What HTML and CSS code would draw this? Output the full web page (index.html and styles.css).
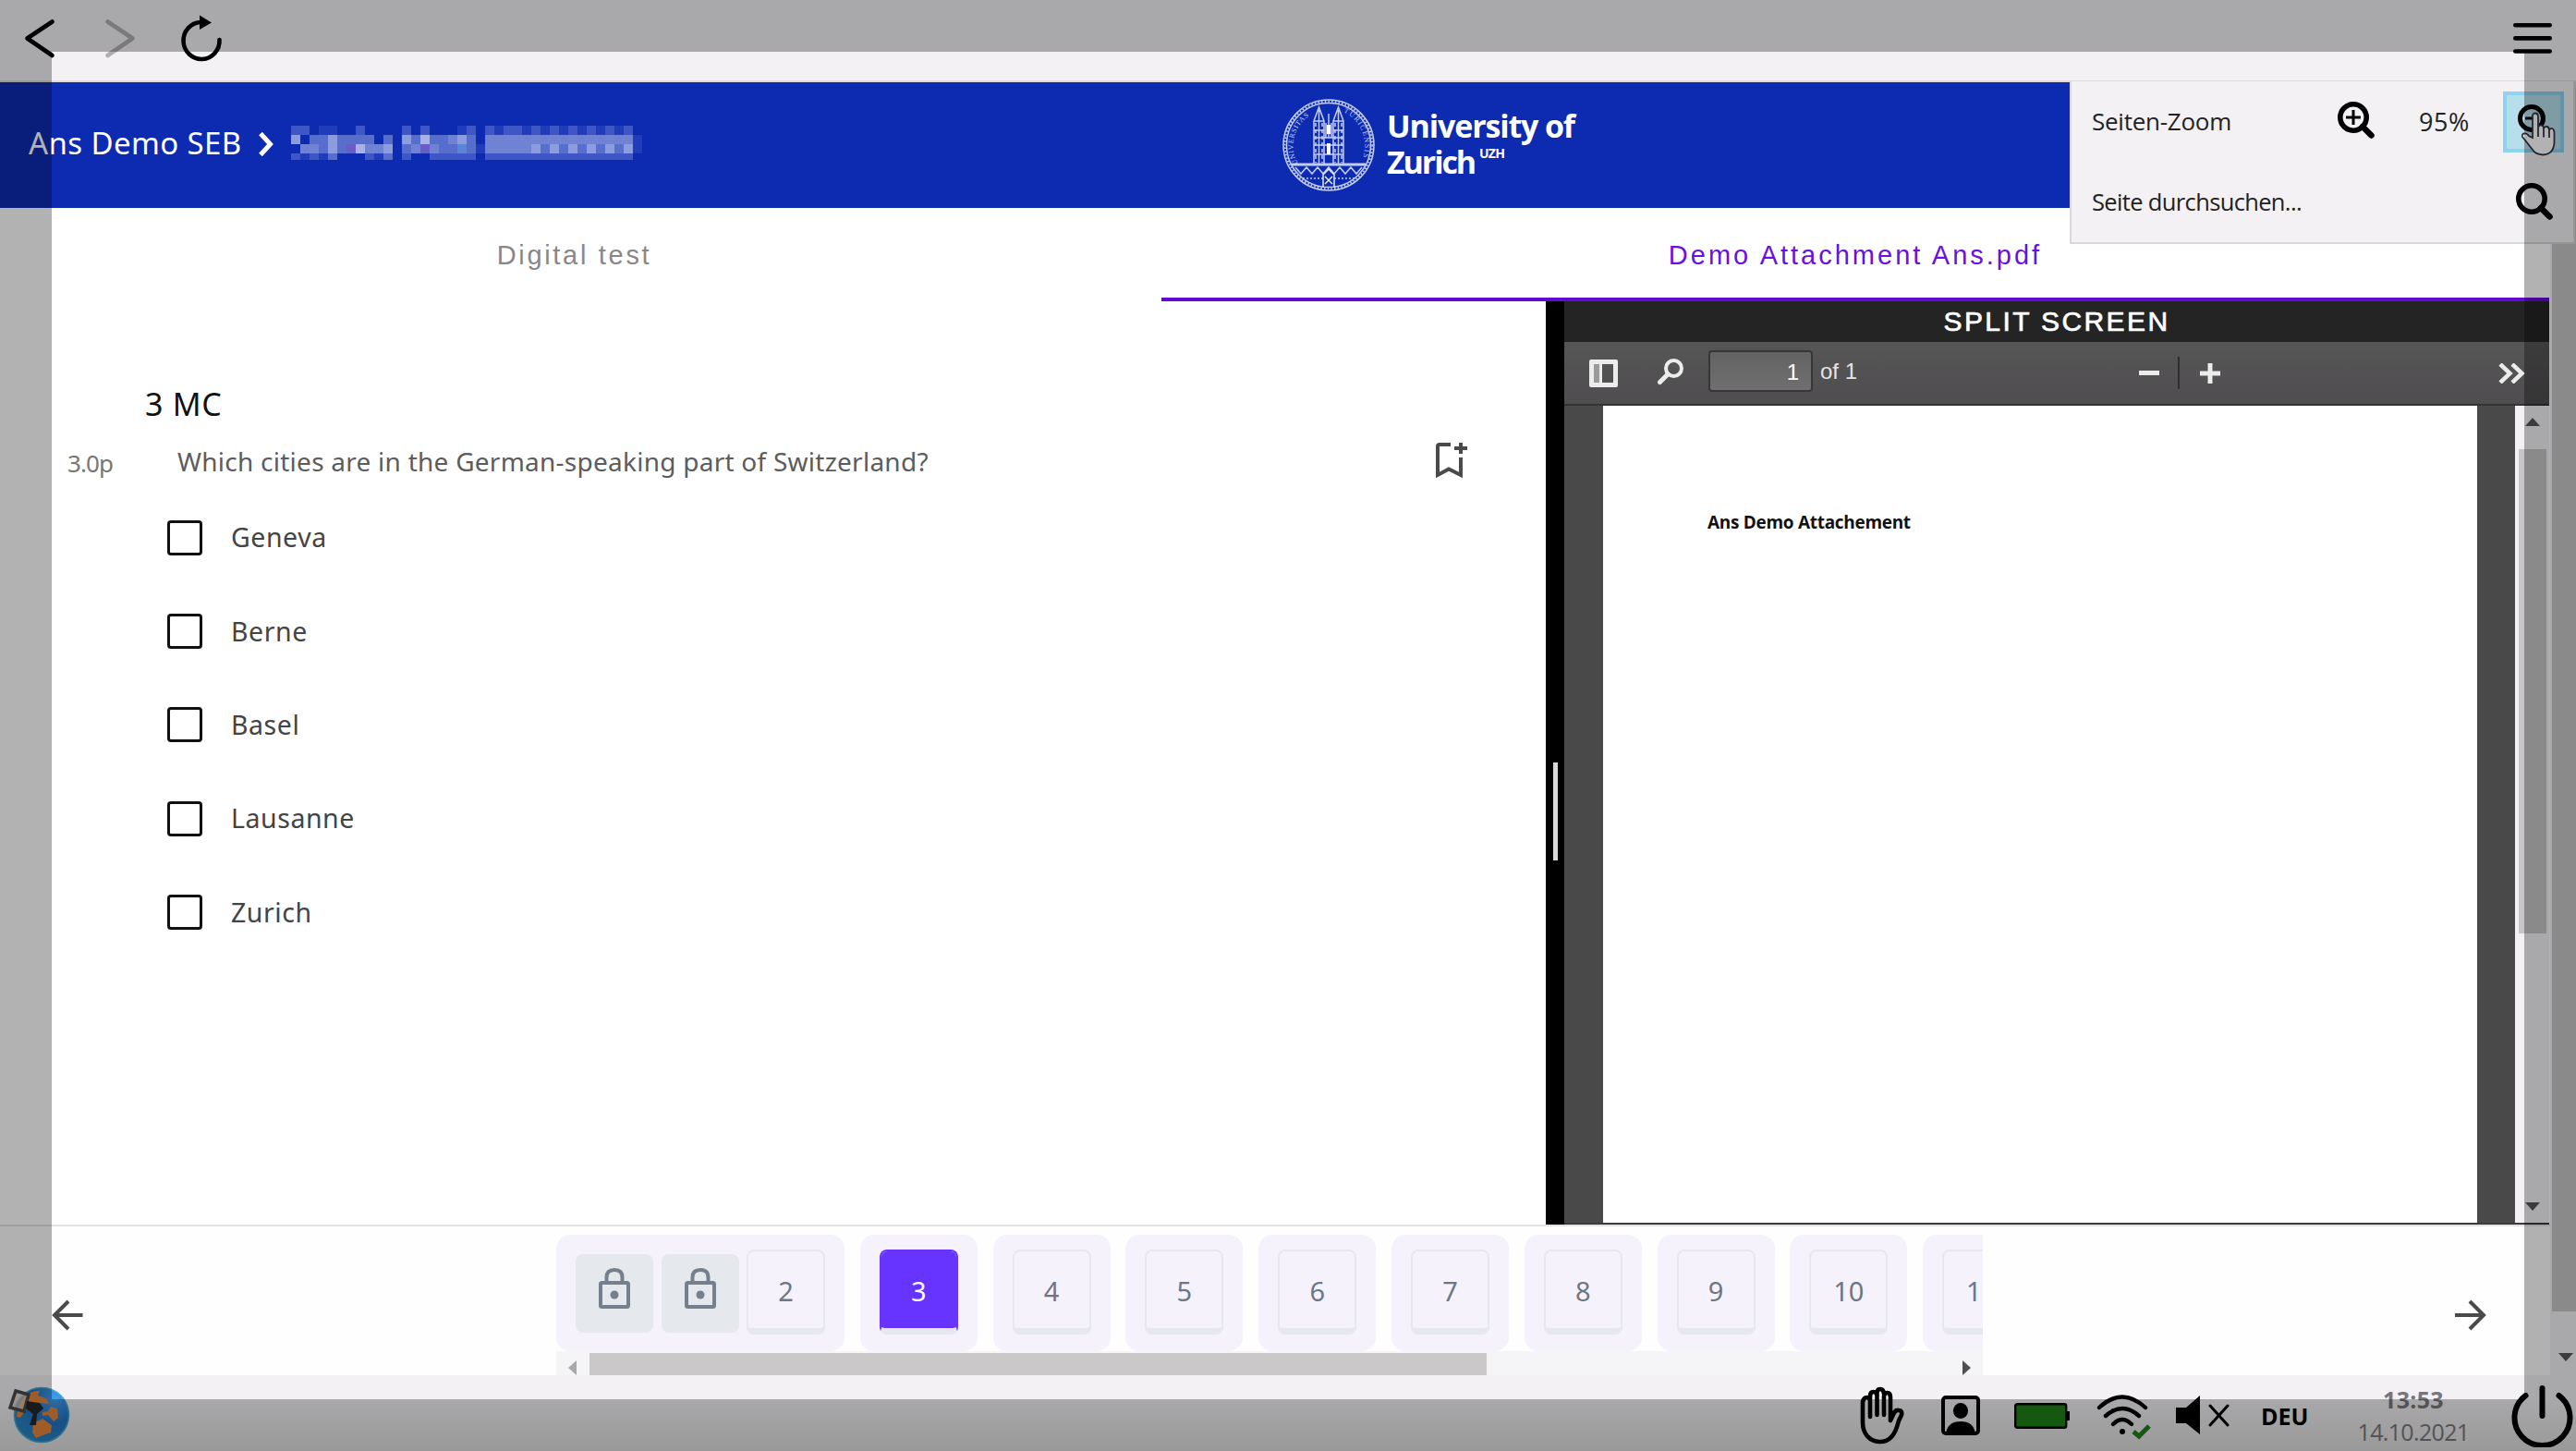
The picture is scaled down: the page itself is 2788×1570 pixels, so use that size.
FILE: index.html
```html
<!DOCTYPE html>
<html lang="de">
<head>
<meta charset="utf-8">
<title>Ans Demo SEB</title>
<link rel="stylesheet" href="styles.css">
</head>
<body>
<div class="toolbar">
  <svg class="nav-icons" viewBox="0 0 260 89" fill="none" stroke="#000" stroke-width="4.600" stroke-linecap="round" stroke-linejoin="round">
    <path d="M56.500 23.500L29.500 41.500L56.500 60"/>
    <path d="M116.500 23.500L143.500 41.500L116.500 60" stroke="#b0aeb0"/>
    <path d="M237.500 43A19.500 20 0 1 1 217 24"/>
    <path d="M216 16.500V32L229 24.500Z" fill="#000" stroke="none"/>
  </svg>
  <svg class="burger" viewBox="0 0 42 33" stroke="#000" stroke-width="4.600" stroke-linecap="round"><path d="M2.300 2.300H39.700M2.300 16.400H39.700M2.300 30.500H39.700"/></svg>
</div>
<div class="browser">
  <div class="page">
    <header class="header">
      <div class="crumbs">
        <span class="crumb">Ans Demo SEB</span>
        <svg class="chev" viewBox="0 0 18 28" fill="none" stroke="#fff" stroke-width="5"><path d="M3 2.500L13.500 14L3 25.500"/></svg>
        <svg class="redacted" viewBox="0 0 38 37" preserveAspectRatio="none" shape-rendering="crispEdges">
          <g fill="#3f57c6"><path d="M0 0h2v10h-2zM7 0h1v10h-1zM12 0h1v10h-1zM14 0h1v10h-1zM19 0h1v10h-1zM21 0h16v10h-16zM0 30h1v7h-1zM2 30h1v7h-1zM8 30h1v7h-1zM12 30h1v7h-1zM15 30h5v7h-5zM21 30h16v7h-16z"/></g>
          <g fill="#203cba"><path d="M3 0h2v10h-2zM18 0h1v10h-1zM22 0h1v10h-1zM25 0h1v10h-1zM27 0h1v10h-1zM29 0h1v10h-1zM31 0h1v10h-1zM33 0h1v10h-1zM35 0h1v10h-1zM37 10h1v20h-1zM1 30h1v7h-1zM3 30h1v7h-1zM9 30h1v7h-1zM20 20h1v10h-1z"/></g>
          <g fill="#586ecc"><path d="M2 10h2v10h-2zM5 10h4v10h-4zM10 10h1v10h-1zM13 10h1v10h-1zM15 10h2v10h-2zM19 10h1v10h-1zM3 20h1v10h-1zM5 20h2v10h-2zM8 20h2v10h-2zM12 20h2v10h-2zM16 20h4v10h-4zM27 20h1v10h-1zM29 20h1v10h-1zM31 20h1v10h-1zM33 20h1v10h-1zM35 20h1v10h-1zM4 30h1v7h-1zM10 30h1v7h-1z"/></g>
          <g fill="#6f82d3"><path d="M21 10h16v10h-16zM21 20h5v10h-5zM1 20h2v10h-2zM8 20h2v10h-2zM13 20h1v10h-1zM17 10h1v10h-1zM15 20h1v10h-1z"/></g>
          <g fill="#8c9cde"><path d="M0 10h1v10h-1zM4 10h1v10h-1zM12 10h1v10h-1zM18 10h1v10h-1zM10 20h1v10h-1zM26 20h1v10h-1zM28 20h1v10h-1zM30 20h1v10h-1zM32 20h1v10h-1zM34 20h1v10h-1zM36 20h1v10h-1zM4 20h1v10h-1z"/></g>
          <g fill="#a9b2e6"><path d="M7 20h1v10h-1zM14 10h1v10h-1z"/></g>
          <g fill="#6a5cc8"><path d="M6 20h1v10h-1zM14 20h1v10h-1z"/></g>
          <path fill="#5b85d6" d="M18 20h1v10h-1z"/>
        </svg>
      </div>
      <div class="logo">
        <svg class="seal" viewBox="0 0 100 100" fill="none" stroke="#c3ccf2" stroke-width="1.500">
          <circle cx="50" cy="50" r="49"/><circle cx="50" cy="50" r="45.500"/>
          <circle cx="50" cy="50" r="47.300" stroke-dasharray="1.500 2.200" stroke-width="2"/>
          <path d="M10 71H90" stroke-width="3"/>
          <path d="M34 70V24L39.500 9L45 24V70M55 70V24L60.500 9L66 24V70M39.500 12V70M60.500 12V70M34 24H45M55 24H66M34 34H45M55 34H66M34 42H66M34 50H66M34 60H66M50 16V42M47 26V42M53 26V42"/>
          <path d="M36 26V69M43 26V69M57 26V69M64 26V69" stroke-dasharray="4 3"/>
          <path d="M50 28V38M50 48V60" stroke="#fff" stroke-width="4"/>
          <path d="M14 74L20 81L26 74L32 81L38 74L44 81L50 74L56 81L62 74L68 81L74 74L80 81L86 74"/>
          <path d="M22 86H44M56 86H78" stroke-dasharray="2 2"/>
          <path d="M44 96V82L50 76L56 82V96M46 84L54 92M54 84L46 92" stroke="#e5eafb"/>
          <path id="arcl" stroke="none" d="M17 70A38 38 0 0 1 39 14"/>
          <path id="arcr" stroke="none" d="M66 14A40 40 0 0 1 84 70"/>
          <text class="seal-text"><textPath href="#arcl" textLength="58">UNIVERSITAS</textPath></text>
          <text class="seal-text"><textPath href="#arcr" textLength="58">TURICENSIS</textPath></text>
        </svg>
        <div class="logo-name">
          <div><span class="name-top">University of</span></div>
          <div><span class="name-bottom">Zurich</span><span class="uzh">UZH</span></div>
        </div>
      </div>
    </header>
    <nav class="tabs">
      <div class="tab">Digital test</div>
      <div class="tab active">Demo Attachment Ans.pdf</div>
    </nav>
    <main class="main">
      <section class="question">
        <h1>3 MC</h1>
        <div class="prompt">
          <span class="points">3.0p</span>
          <span class="prompt-text">Which cities are in the German-speaking part of Switzerland?</span>
          <svg class="bookmark" viewBox="0 0 36 40" fill="none" stroke="#4a4a4a" stroke-width="4"><path d="M17 3H5Q3 3 3 5V36L15 29.500L28 36V17M28 1V13M21 7H35"/></svg>
        </div>
        <ul class="answers">
          <li><i class="box"></i><span>Geneva</span></li>
          <li><i class="box"></i><span>Berne</span></li>
          <li><i class="box"></i><span>Basel</span></li>
          <li><i class="box"></i><span>Lausanne</span></li>
          <li><i class="box"></i><span>Zurich</span></li>
        </ul>
      </section>
      <div class="divider"><i></i></div>
      <section class="viewer">
        <div class="split">SPLIT SCREEN</div>
        <div class="pdfbar">
          <svg class="side" viewBox="0 0 31 30"><path fill="#ececec" fill-rule="evenodd" d="M2 0H29Q31 0 31 2V28Q31 30 29 30H2Q0 30 0 28V2Q0 0 2 0ZM14 5V25H26V5Z"/><path fill="#9a9a9a" d="M5 5H11V25H5Z"/></svg>
          <svg class="find" viewBox="0 0 30 30" fill="none" stroke="#ececec"><circle cx="18.500" cy="11.500" r="8.500" stroke-width="4"/><path d="M12 18L3.500 26.500" stroke-width="5" stroke-linecap="round"/></svg>
          <span class="pageno">1</span><span class="of">of 1</span>
          <span class="zoomer"><i class="minus"></i><i class="sep"></i><svg class="plus" viewBox="0 0 22 22"><path fill="#ececec" d="M8.500 0h5v8.500H22v5h-8.500V22h-5v-8.500H0v-5h8.500z"/></svg></span>
          <svg class="more" viewBox="0 0 30 22" fill="none" stroke="#ececec" stroke-width="4.500"><path d="M2 1L12.500 11L2 21M15 1L25.500 11L15 21"/></svg>
        </div>
        <div class="pdfbody">
          <div class="sheet"><span class="doc">Ans Demo Attachement</span></div>
          <div class="vbar"><svg viewBox="0 0 16 9"><path d="M0 9L8 0L16 9z"/></svg><i></i><svg viewBox="0 0 16 9"><path d="M0 0L8 9L16 0z"/></svg></div>
        </div>
      </section>
    </main>
    <footer class="pager">
      <svg class="arrow" viewBox="0 0 34 34" fill="none" stroke="#4a4a4a" stroke-width="4"><path d="M33.500 17H3M18 2L3 17L18 32"/></svg>
      <div class="strip">
        <div class="groups">
          <div class="group">
            <span class="lock"><svg viewBox="0 0 36 46" fill="none" stroke="#76808c" stroke-width="4"><rect x="3" y="17" width="30" height="26" rx="1.500"/><path d="M9.500 17V11Q9.500 3 18 3T26.500 11V17"/><circle cx="18" cy="30" r="4.500" fill="#76808c" stroke="none"/></svg></span>
            <span class="lock"><svg viewBox="0 0 36 46" fill="none" stroke="#76808c" stroke-width="4"><rect x="3" y="17" width="30" height="26" rx="1.500"/><path d="M9.500 17V11Q9.500 3 18 3T26.500 11V17"/><circle cx="18" cy="30" r="4.500" fill="#76808c" stroke="none"/></svg></span>
            <span class="num">2</span>
          </div>
          <div class="group"><span class="num current">3</span></div>
          <div class="group"><span class="num">4</span></div>
          <div class="group"><span class="num">5</span></div>
          <div class="group"><span class="num">6</span></div>
          <div class="group"><span class="num">7</span></div>
          <div class="group"><span class="num">8</span></div>
          <div class="group"><span class="num">9</span></div>
          <div class="group"><span class="num">10</span></div>
          <div class="group"><span class="num">11</span></div>
        </div>
        <div class="hbar"><svg viewBox="0 0 9 16"><path fill="#a8a8a8" d="M9 0V16L0 8z"/></svg><i></i><svg class="hr" viewBox="0 0 9 16"><path fill="#505050" d="M0 0V16L9 8z"/></svg></div>
      </div>
      <svg class="arrow next" viewBox="0 0 34 34" fill="none" stroke="#4a4a4a" stroke-width="4"><path d="M0 17H31M16 2L31 17L16 32"/></svg>
    </footer>
  </div>
  <div class="outer-bar"><i></i><svg viewBox="0 0 16 9"><path d="M0 0L8 9L16 0z"/></svg></div>
</div>
<div class="taskbar">
  <svg class="globe" viewBox="0 0 68 62">
    <defs><radialGradient id="sea" cx=".75" cy=".2" r=".9"><stop offset="0" stop-color="#3ea0ee"/><stop offset=".5" stop-color="#2272c0"/><stop offset="1" stop-color="#2b86c0"/></radialGradient></defs>
    <circle cx="37" cy="31" r="29.500" fill="url(#sea)" stroke="#48a6cc" stroke-width="1.500"/>
    <g fill="#e2853a"><path d="M18 12Q26 4 35 5L33 10L42 13L45 19L36 18L32 24L22 22L14 34L10 33Q11 20 18 12Z"/><path d="M38 28L44 27L47 22L54 24L55 34L50 38L44 31L38 32Z"/><path d="M28 40L38 35L48 42L47 50L38 53L31 56L27 50Z"/></g>
    <path d="M9 5L23 9L18 27L3 23Z" fill="#d9c9b4" fill-opacity=".7" stroke="#4a4a4d" stroke-width="3.500"/>
    <path d="M21 16L35 18L39 24L32 30L31 42L24 42L28 30L20 24Z" fill="#262628"/>
  </svg>
  <div class="tray">
    <svg class="t-hand" viewBox="0 0 48 63" fill="none" stroke="#000" stroke-width="4.600" stroke-linecap="round" stroke-linejoin="round"><path d="M11 31V16Q11 12 7.500 12T3 17V39C3 52 11 60 22 60C32 60 37 53 40 44Q42 36 45 31Q46 26 42 26Q38 25 36 31L33 37V12Q33 7 29.500 7T26 11V31M18.500 31V7Q18.500 3 22 3T26 8M18.500 10Q18 6 14.500 6T11 11V20M11 22V33"/></svg>
    <svg class="t-user" viewBox="0 0 42 43"><rect x="2" y="2" width="38" height="39" rx="3" fill="none" stroke="#000" stroke-width="4"/><ellipse cx="21" cy="16.500" rx="8" ry="8.500"/><path d="M5 41Q7 28 21 28T37 41z"/></svg>
    <svg class="t-batt" viewBox="0 0 60 28"><rect x="1.200" y="1.200" width="55" height="25.600" rx="2" fill="#1f7f18" stroke="#000" stroke-width="2.400"/><path d="M57 9H60V19H57z"/></svg>
    <svg class="t-wifi" viewBox="0 0 60 49" fill="none" stroke="#000" stroke-width="4.400" stroke-linecap="round"><path d="M3 14Q28 -9 53 14M10 23Q28 7 46 23M18 32Q28 22 38 32"/><circle cx="28" cy="40" r="3" fill="#000" stroke="none"/><path d="M40 40L46 45L57 34" stroke="#1f7f18" stroke-width="5" stroke-linecap="butt"/></svg>
    <svg class="t-vol" viewBox="0 0 60 42"><path d="M1 13H12L27 0V42L12 30H1z"/><path d="M38 11L57 32M57 11L38 32" stroke="#000" stroke-width="3" stroke-linecap="round"/></svg>
    <span class="lang">DEU</span>
    <div class="clock"><b>13:53</b><span class="date">14.10.2021</span></div>
    <svg class="t-power" viewBox="0 0 67 68" fill="none" stroke="#000" stroke-width="6" stroke-linecap="round"><path d="M15.500 12A30 30 0 1 0 51.500 12M33.500 4V34"/></svg>
  </div>
</div>
<div class="menu">
  <div class="menu-row"><span class="label">Seiten-Zoom</span>
    <svg class="m-plus" viewBox="0 0 42 42" fill="none" stroke="#000"><circle cx="18" cy="18" r="14.200" stroke-width="5.600"/><path d="M28 28L37.500 37.500" stroke-width="6.500" stroke-linecap="round"/><path d="M10 18H26M18 10V26" stroke-width="3"/></svg>
    <span class="pct">95%</span>
    <span class="hot"><svg viewBox="0 0 42 42" fill="none" stroke="#000"><circle cx="18" cy="18" r="12.500" stroke-width="5"/><path d="M11 18H25" stroke-width="3"/></svg></span>
  </div>
  <div class="menu-row"><span class="label search">Seite durchsuchen...</span>
    <svg class="m-find" viewBox="0 0 42 42" fill="none" stroke="#000"><circle cx="18" cy="18" r="14.200" stroke-width="5.600"/><path d="M28 28L37.500 37.500" stroke-width="6.500" stroke-linecap="round"/></svg>
  </div>
</div>
<svg class="cursor" viewBox="0 0 38 48"><path d="M13 28V5Q13 1.500 16 1.500T19 5V17Q20 14 22.500 14.500T25 18Q26 15.500 28.500 16T31 20Q32 17.500 34 18T36.500 22V33Q36 46 24 46.500Q16 46 13 41L2 27Q1 24 4 23.500T9 26Z" fill="#fff" stroke="#35364a" stroke-width="1.800"/><path d="M19 17V27M25 18V27.500M31 20V28" stroke="#35364a" stroke-width="1.800"/></svg>
<div class="shade"></div>
</body>
</html>
```
FILE: styles.css
```css
* { box-sizing: border-box; }
body { margin: 0; width: 2788px; height: 1570px; overflow: hidden; display: flex; flex-direction: column; background: #f3f1f4; font-family: "Noto Sans", sans-serif; }
svg { display: block; flex: none; }
span, b { white-space: nowrap; }

/* Browser toolbar */
.toolbar { height: 89px; flex: none; display: flex; justify-content: space-between; border-bottom: 2px solid #dedcdc; }
.nav-icons { width: 260px; height: 89px; }
.burger { width: 42px; height: 33px; margin: 25px 26px 0 0; }

.browser { height: 1399px; flex: none; display: flex; }
.page { width: 2760px; display: flex; flex-direction: column; background: #fff; }

/* Page header */
.header { height: 136px; flex: none; display: flex; align-items: center; background: #0d2bb1; color: #fff; }
.crumbs { width: 1388px; display: flex; align-items: center; padding: 0 0 5px 31px; }
.crumb { font-size: 33px; width: 230px; letter-spacing: .4px; }
.chev { width: 18px; height: 28px; margin: 2px 0 0 18px; }
.redacted { width: 380px; height: 37px; margin: -1px 0 0 18px; }
.logo { display: flex; gap: 13px; }
.seal { width: 100px; height: 100px; }
.seal-text { font: 8px "Liberation Serif", serif; fill: #c3ccf2; stroke: none; }
.logo-name { font: 700 34px/39px "Open Sans", sans-serif; padding-top: 10px; }
.logo-name > div { display: flex; height: 39px; }
.name-top { letter-spacing: -1.14px; }
.name-bottom { letter-spacing: -2.1px; }
.uzh { font-size: 14px; line-height: 20px; margin-left: 5px; letter-spacing: -.8px; }

.tabs { height: 101px; flex: none; display: flex; font: 29px/102px "Liberation Sans", Arial, sans-serif; color: #888; letter-spacing: 2.69px; }
.tab { width: 1257px; text-align: center; padding-right: 14px; }
.tab.active { width: 1502px; padding: 0; color: #6a10e0; border-bottom: 4px solid #6408d8; letter-spacing: 3px; }

/* Question */
.main { height: 999px; flex: none; display: flex; }
.question { width: 1673px; flex: none; }
h1 { margin: 91px 0 0 157px; font-weight: 400; font-size: 34px; line-height: 40px; letter-spacing: .7px; color: #111; }
.prompt { height: 54px; margin-top: 15px; display: flex; align-items: center; color: #5c5c5e; font-size: 28px; }
.points { width: 119px; margin-left: 73px; font-size: 26px; letter-spacing: -.9px; color: #777; padding-top: 3px; }
.prompt-text { width: 813px; letter-spacing: .25px; }
.bookmark { width: 36px; height: 40px; margin: 0 0 2px 548px; }
.answers { list-style: none; margin: 5px 0 0 181px; padding: 0; font-size: 28.500px; letter-spacing: .55px; color: #444; }
.answers li { height: 101.400px; display: flex; align-items: center; gap: 31px; }
.answers span { padding-bottom: 1px; }
.box { width: 38px; height: 38px; border: 3px solid #111; border-radius: 4px; }
.divider { width: 20px; flex: none; background: #000; display: flex; align-items: center; justify-content: center; }
.divider i { width: 5px; height: 106px; background: #d8d8d8; margin-top: 104px; }

/* PDF viewer */
.viewer { width: 1066px; flex: none; display: flex; flex-direction: column; border-bottom: 2px solid #3c3a3b; background: #4a494a; }
.split { height: 44px; flex: none; background: #242424; color: #fff; text-align: center; font: 30px/43px "Liberation Sans", Arial, sans-serif; letter-spacing: 2.400px; -webkit-text-stroke: .7px #fff; }
.pdfbar { height: 69px; flex: none; display: flex; align-items: center; background: linear-gradient(#575657, #4f4d4f); border-bottom: 2px solid #333; color: #e4e4e4; font: 24px "Liberation Sans", Arial, sans-serif; }
.side { width: 31px; height: 30px; margin-left: 27px; }
.find { width: 30px; height: 30px; margin: -4px 0 0 42px; }
.pageno { width: 113px; height: 45px; margin: -4px 8px 0 26px; border: 2px solid #363636; border-radius: 4px; background: linear-gradient(#646364, #706f70); text-align: right; padding-right: 13px; line-height: 44px; color: #fff; }
.of { width: 40px; line-height: 44px; margin-top: -4px; }
.zoomer { display: flex; align-items: center; margin-left: 305px; }
.minus { width: 22px; height: 5px; background: #ececec; }
.sep { width: 2px; height: 35px; background: #2e2e2e; margin: 0 22px 0 20px; }
.plus { width: 22px; height: 22px; }
.more { width: 30px; height: 22px; margin-left: 301px; }
.pdfbody { flex: 1; display: flex; }
.sheet { width: 946px; margin-left: 42px; background: #fff; padding: 113px 0 0 113px; }
.doc { display: inline-block; font: bold 19px/26px "Open Sans", sans-serif; letter-spacing: -.3px; color: #111; }
.vbar { width: 37px; margin-left: 41px; background: #f3f1f4; display: flex; flex-direction: column; align-items: center; padding: 13px 3px 13px 4px; }
.vbar svg, .outer-bar svg { width: 16px; height: 9px; fill: #555; }
.vbar i { width: 30px; height: 524px; margin: 25px 0 auto; background: #c8c6c8; }
.outer-bar { width: 28px; padding-left: 2px; background: #f3f1f4; }
.outer-bar i { display: block; height: 1330px; background: #c8c6c8; margin-bottom: 45px; }
.outer-bar svg { margin-left: 7px; }

/* Question pager */
.pager { height: 163px; flex: none; display: flex; border-top: 2px solid #e4e4e6; background: #fefefe; }
.arrow { width: 34px; height: 34px; margin: 79px 512px 0 56px; }
.arrow.next { margin: 79px 0 0 511px; }
.strip { width: 1544px; overflow: hidden; display: flex; flex-direction: column; }
.groups { display: flex; gap: 16.800px; padding-top: 9px; height: 135px; flex: none; }
.group { height: 126px; flex: none; display: flex; gap: 8.500px; padding: 16px 21px 0; border-radius: 15px; background: #f5f2fb; }
.lock { width: 84px; height: 85px; margin-top: 5px; border-radius: 8px; background: #e5e8ec; display: flex; justify-content: center; padding-top: 14px; }
.lock svg { width: 36px; height: 46px; }
.num { width: 85px; height: 92px; border: 2px solid #e5e8ec; border-bottom-width: 7px; border-radius: 8px; text-align: center; font-size: 29px; line-height: 85px; color: #6d7683; }
.num.current { background: #6633ff; color: #fff; border-color: #6633ff; border-bottom-color: #e5e8ec; background-clip: padding-box; }
.hbar { height: 26px; display: flex; align-items: center; background: #f5f4f6; padding: 2px 13px 0; }
.hbar svg { width: 9px; height: 16px; margin-top: 8px; }
.hbar i { width: 971px; height: 24px; background: #cac8c9; margin-left: 14px; }
.hbar .hr { margin-left: auto; }

/* Taskbar */
.taskbar { height: 82px; flex: none; display: flex; justify-content: space-between; background: linear-gradient(#f3f1f4 30%, #dddcdd); }
.globe { width: 68px; height: 62px; margin: 12px 0 0 8px; }
.tray { display: flex; align-items: flex-start; width: 775px; }
.t-hand { width: 48px; height: 63px; margin-top: 12px; }
.t-user { width: 42px; height: 43px; margin: 22px 0 0 40px; }
.t-batt { width: 60px; height: 28px; margin: 30px 0 0 37px; }
.t-wifi { width: 60px; height: 49px; margin: 21px 0 0 29px; }
.t-vol { width: 60px; height: 42px; margin: 22px 0 0 25px; }
.lang { width: 50px; margin: 26px 0 0 33px; font: bold 25px/36px "Open Sans", sans-serif; color: #000; }
.clock { width: 130px; margin: 9px 0 0 50px; display: flex; flex-direction: column; align-items: center; font: 25px/35px "Open Sans", sans-serif; color: #77767a; }
.clock b { letter-spacing: .3px; }
.date { letter-spacing: -.65px; }
.t-power { width: 67px; height: 68px; margin: 10px 0 0 41px; }

/* Zoom and search menu */
.menu { position: absolute; left: 2240px; top: 88px; width: 547px; height: 176px; border: 2px solid #d9d7d9; border-top: 0; background: #f3f1f4; padding: 0 0 0 22px; font: 26px "Open Sans", sans-serif; color: #222; }
.menu-row { height: 87px; display: flex; align-items: center; }
.label { width: 151px; letter-spacing: -.25px; padding-bottom: 1px; }
.label.search { width: 229px; font-size: 25.500px; letter-spacing: -.65px; }
.m-plus { width: 42px; height: 42px; margin: -4px 0 0 114px; }
.pct { width: 56px; margin-left: 47px; font-size: 27px; letter-spacing: .5px; }
.hot { width: 66px; height: 66px; margin-left: 35px; border: 4px solid #8fd3f1; background: #b7deeb; padding: 7px 0 0 9px; }
.hot svg { width: 42px; height: 42px; }
.m-find { width: 42px; height: 42px; margin: -2px 0 0 229px; }
.cursor { position: absolute; left: 2728px; top: 121px; width: 38px; height: 48px; }
.shade { position: absolute; inset: 0; border: 56px solid rgba(0, 0, 0, .3); }
```
